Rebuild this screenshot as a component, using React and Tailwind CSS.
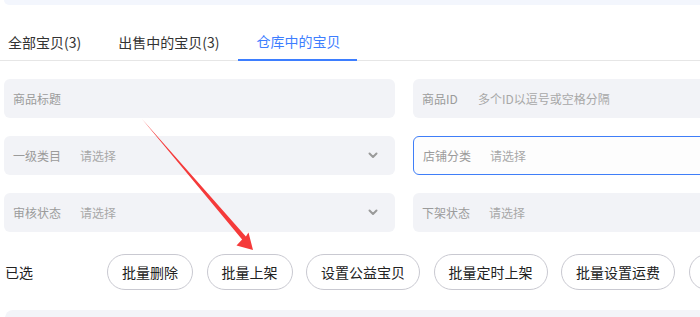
import React from "react";

const tabs = [
  { name: "全部宝贝(3)", first: true },
  { name: "出售中的宝贝(3)" },
  { name: "仓库中的宝贝", active: true },
];

const actions = ["批量删除", "批量上架", "设置公益宝贝", "批量定时上架", "批量设置运费", "批量设置"];

const Chevron = () => (
  <svg width="10" height="7" viewBox="0 0 10 7" className="shrink-0">
    <path d="M1.5 1.5 L5 5 L8.5 1.5" fill="none" stroke="#9a9a9a" strokeWidth="2" strokeLinecap="round" strokeLinejoin="round" />
  </svg>
);

const Field = ({ label, value, select, focused, labelWidth = "w-[67px]" }) => (
  <div
    className={`h-[39px] rounded-md flex items-center pl-[9px] pr-[17px] ${focused ? "border border-[#3f7ef8] bg-[#fdfdfd] pl-[8px]" : "bg-[#f2f3f7]"
      }`}
  >
    <span className={`${labelWidth} shrink-0 text-[12px] text-[#9b9b9b] whitespace-nowrap`}>{label}</span>
    {value && <span className="flex-1 text-[12px] text-[#a8a8a8] whitespace-nowrap">{value}</span>}
    {select && <Chevron />}
  </div>
);

export default function App() {
  return (
    <div
      className="relative w-[700px] h-[317px] overflow-hidden bg-white"
      style={{ fontFamily: '"Noto Sans CJK SC", "Noto Sans", sans-serif' }}
    >
      {/* top card edge */}
      <div className="h-[5px] ml-[4px] bg-[#f3f6fd] rounded-bl-lg" />

      {/* Tabs */}
      <div className="flex pt-[18px] border-b border-[#e6e6e6]">
        {tabs.map((t) => (
          <div
            key={t.name}
            className={`h-[38px] -mb-px flex items-center text-[14px] whitespace-nowrap ${t.first ? "pl-[8px] pr-[18px]" : t.active ? "pl-[18px] pr-[17px]" : "px-[19px]"
              } ${t.active ? "text-[#3d7eff] border-b-2 border-[#3d7eff]" : "text-[#333333]"}`}
          >
            {t.name}
          </div>
        ))}
      </div>

      {/* Filters */}
      <div className="grid grid-cols-[391px_391px] gap-x-[18px] gap-y-[18px] pl-[4px] mt-[18px]">
        <Field label="商品标题" />
        <Field label="商品ID" value="多个ID以逗号或空格分隔" labelWidth="w-[56px]" />
        <Field label="一级类目" value="请选择" select />
        <Field label="店铺分类" value="请选择" focused />
        <Field label="审核状态" value="请选择" select />
        <Field label="下架状态" value="请选择" />
      </div>

      {/* Batch actions */}
      <div className="flex items-center mt-[22px] h-[36px]">
        <span className="w-[107px] shrink-0 pl-[5px] text-[14px] text-[#222222]">已选</span>
        <div className="flex gap-[13.5px]">
          {actions.map((a) => (
            <button
              key={a}
              className="h-[36px] px-[14px] shrink-0 rounded-full border border-[#c9c9d1] bg-white text-[14px] text-[#222222] whitespace-nowrap"
            >
              {a}
            </button>
          ))}
        </div>
      </div>

      {/* next card edge */}
      <div className="mt-[20px] ml-[5px] h-[20px] bg-[#f3f4f8] rounded-tl-lg" />

      {/* annotation arrow */}
      <svg className="absolute inset-0 pointer-events-none" width="700" height="317">
        <polygon
          points="142,119 245.9,236.4 248.5,232.5 253,250 236.5,245.5 242.1,239.6"
          fill="#f53a3a"
        />
      </svg>
    </div>
  );
}
